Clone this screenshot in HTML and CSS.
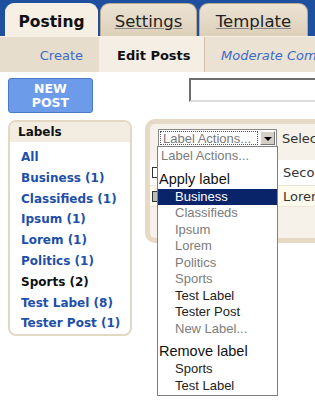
FILE: index.html
```html
<!DOCTYPE html>
<html lang="en">
<head>
  <meta charset="UTF-8" />
  <title>Edit Posts</title>
  <link rel="stylesheet" href="styles.css">
</head>
<body>
  <div class="page">
    <div class="tabs">
      <div class="tab active">Posting</div>
      <div class="tab"><a href="#">Settings</a></div>
      <div class="tab wide"><a href="#">Template</a></div>
    </div>

    <div class="subnav">
      <a class="sub-create" href="#">Create</a>
      <span class="sub-edit">Edit Posts</span>
      <a class="sub-moderate" href="#">Moderate Comments</a>
    </div>

    <div class="toolbar">
      <button class="new-post">NEW<br>POST</button>
      <input class="search" type="text">
    </div>

    <div class="content">
      <div class="labels">
        <div class="labels-head">Labels</div>
        <ul class="label-list">
          <li><a href="#">All</a></li>
          <li><a href="#">Business (1)</a></li>
          <li><a href="#">Classifieds (1)</a></li>
          <li><a href="#">Ipsum (1)</a></li>
          <li><a href="#">Lorem (1)</a></li>
          <li><a href="#">Politics (1)</a></li>
          <li class="current">Sports (2)</li>
          <li><a href="#">Test Label (8)</a></li>
          <li><a href="#">Tester Post (1)</a></li>
        </ul>
      </div>

      <div class="posts">
        <div class="posts-bar">
          <div class="fake-select">
            <span class="fake-value">Label Actions...</span>
            <span class="fake-arrow"></span>
          </div>
          <span class="bar-text">Select: All, None</span>
        </div>
        <div class="post-row">
          <span class="check"></span>
          <span class="post-title">Second Post</span>
        </div>
        <div class="post-row alt">
          <span class="check checked"></span>
          <span class="post-title">Lorem Ipsum</span>
        </div>

        <ul class="dropdown">
          <li class="opt muted">Label Actions...</li>
          <li class="group">Apply label</li>
          <li class="opt sub selected">Business</li>
          <li class="opt sub muted">Classifieds</li>
          <li class="opt sub muted">Ipsum</li>
          <li class="opt sub muted">Lorem</li>
          <li class="opt sub muted">Politics</li>
          <li class="opt sub muted">Sports</li>
          <li class="opt sub">Test Label</li>
          <li class="opt sub">Tester Post</li>
          <li class="opt sub muted">New Label...</li>
          <li class="group">Remove label</li>
          <li class="opt sub">Sports</li>
          <li class="opt sub">Test Label</li>
        </ul>
      </div>
    </div>
  </div>
</body>
</html>
```

FILE: styles.css
```css
body {
  margin: 0;
  padding: 0;
  background: #fff;
  font-family: "DejaVu Sans", sans-serif;
  color: #222;
}
.page {
  width: 315px;
  height: 400px;
  overflow: hidden;
}
a {
  text-decoration: none;
}

/* top tabs */
.tabs {
  display: flex;
  gap: 2px;
  height: 33px;
  padding: 3px 0 0 5px;
  background: #1f4f9f;
}
.tab {
  width: 97px;
  height: 33px;
  flex: none;
  box-sizing: border-box;
  padding-top: 3px;
  display: flex;
  align-items: center;
  justify-content: center;
  border: 1px solid #b9a98e;
  border-bottom: none;
  border-radius: 9px 9px 0 0;
  background: linear-gradient(#ece3d3, #ddd0ba);
  font-size: 16.5px;
}
.tab a {
  color: #222;
  text-decoration: underline;
  text-decoration-color: #888;
}
.tab.active {
  width: 93px;
  border-color: #f5efe4;
  background: #f5efe4;
  font-weight: bold;
  font-size: 15.5px;
  color: #111;
}
.tab.wide {
  width: 109px;
}

/* sub navigation */
.subnav {
  display: flex;
  height: 36px;
  align-items: stretch;
  overflow: hidden;
  background: #ebe2d4;
  border-top: 1px solid #f5efe4;
  box-sizing: border-box;
  font-size: 13px;
  white-space: nowrap;
}
.subnav > * {
  display: flex;
  flex: none;
  align-items: center;
  padding-top: 1px;
}
.sub-create {
  width: 99px;
  box-sizing: border-box;
  justify-content: flex-end;
  padding-right: 16px;
  background: #e7ddcc;
  color: #3a6bc8;
}
.sub-edit {
  width: 106px;
  box-sizing: border-box;
  padding-left: 18px;
  background: #f4eee5;
  border-right: 1px solid #cdbfa8;
  font-weight: bold;
  color: #111;
}
.sub-moderate {
  padding-left: 16px;
  color: #3a6bc8;
  font-style: italic;
}

/* toolbar */
.toolbar {
  display: flex;
  align-items: flex-start;
  overflow: hidden;
  padding: 6px 0 0 8px;
  height: 37px;
}
.new-post {
  flex: none;
  width: 85px;
  height: 35px;
  padding: 0;
  border: 1px solid #4c78c8;
  border-radius: 3px;
  background: #6c9ce9;
  color: #fff;
  font-family: "DejaVu Sans", sans-serif;
  font-weight: bold;
  font-size: 12.5px;
  line-height: 14px;
}
.search {
  flex: none;
  margin-left: 96px;
  width: 140px;
  height: 24px;
  box-sizing: border-box;
  border: 2px solid #dcdcdc;
  border-top-color: #6d6d6d;
  border-left-color: #6d6d6d;
  padding: 0;
}

/* main columns */
.content {
  display: flex;
  align-items: flex-start;
  gap: 13px;
  padding: 5px 0 0 8px;
}
.labels {
  width: 124px;
  flex: none;
  box-sizing: border-box;
  border: 2px solid #e4d8c4;
  border-radius: 8px;
  overflow: hidden;
}
.labels-head {
  height: 20px;
  line-height: 20px;
  padding-left: 8px;
  background: #f3ece1;
  font-weight: bold;
  font-size: 12px;
  color: #111;
}
.label-list {
  list-style: none;
  margin: 0;
  padding: 5px 0 0 11px;
  font-size: 12px;
  font-weight: bold;
  line-height: 20.8px;
  white-space: nowrap;
}
.label-list a {
  color: #1e4fa8;
}
.label-list .current {
  color: #111;
}

.posts {
  position: relative;
  width: 200px;
  height: 124px;
  flex: none;
  margin-top: -1px;
  box-sizing: border-box;
  border: 5px solid #e6dac6;
  border-radius: 10px;
  background: #f6f1e9;
  font-size: 13px;
  white-space: nowrap;
}
.posts-bar {
  display: flex;
  align-items: center;
  gap: 5px;
  padding: 5px 0 0 8px;
  height: 18px;
}
.fake-select {
  display: flex;
  flex: none;
  width: 119px;
  height: 18px;
  box-sizing: border-box;
  border: 1px solid #8a8a8a;
  background: #fff;
  padding: 1px;
}
.fake-value {
  flex: 1;
  border: 1px dotted #555;
  font-family: "Liberation Sans", sans-serif;
  font-size: 13px;
  line-height: 13px;
  color: #7a7a7a;
  padding-left: 2px;
}
.fake-arrow {
  width: 15px;
  flex: none;
  margin-left: 2px;
  box-sizing: border-box;
  border: 1px solid #fff;
  border-right-color: #777;
  border-bottom-color: #777;
  background: #d4d0c8;
  position: relative;
}
.fake-arrow::after {
  content: "";
  position: absolute;
  left: 3px;
  top: 5px;
  border-left: 4px solid transparent;
  border-right: 4px solid transparent;
  border-top: 4px solid #000;
}
.bar-text {
  color: #333;
}
.post-row {
  display: flex;
  align-items: center;
  height: 25px;
  margin-top: 13px;
  background: #fff;
  border-bottom: 1px solid #ece6da;
}
.post-row.alt {
  height: 20px;
  margin-top: 0;
  background: #fdfbee;
}
.check {
  flex: none;
  width: 9px;
  height: 9px;
  margin-left: 2px;
  border: 1px solid #333;
  background: #fff;
}
.check.checked {
  background: #bbb;
}
.post-title {
  margin-left: 120px;
  color: #333;
}

/* open label actions menu */
.dropdown {
  position: absolute;
  left: 7px;
  top: 22px;
  width: 121px;
  margin: 0;
  padding: 1px 0 1px;
  list-style: none;
  box-sizing: border-box;
  border: 1px solid #7f7f7f;
  background: #fff;
  font-family: "Liberation Sans", sans-serif;
  font-size: 13px;
  z-index: 2;
}
.dropdown .opt {
  height: 16.5px;
  line-height: 16.5px;
  padding-left: 3px;
  color: #222;
}
.dropdown .group {
  padding: 4px 0 0 1px;
  line-height: 20px;
  font-size: 14.5px;
  color: #111;
}
.dropdown .sub {
  padding-left: 17px;
}
.dropdown .muted {
  color: #7c7c7c;
}
.dropdown .selected {
  background: #0a246a;
  color: #fff;
}
```
